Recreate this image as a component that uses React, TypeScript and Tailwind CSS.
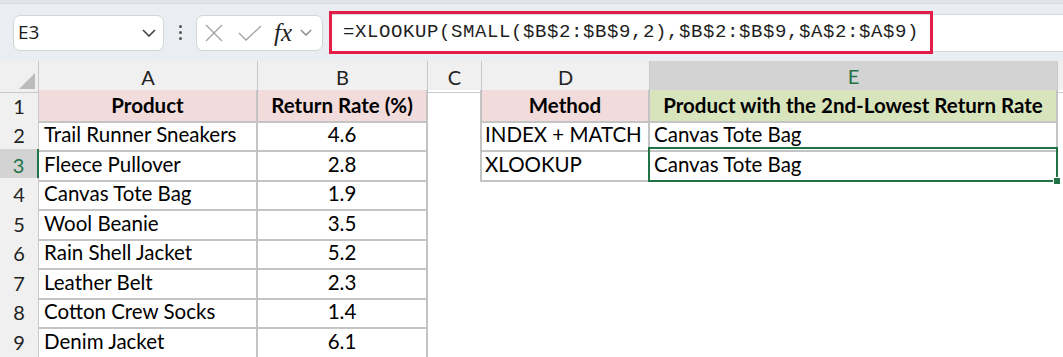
import React from "react";

const grid = "grid grid-cols-[39px_219px_170px_54px_168px_408px_1fr]";
const cellFont = "font-['Lato',sans-serif] text-[20.5px] text-black";

const products: [string, string][] = [
  ["Trail Runner Sneakers", "4.6"],
  ["Fleece Pullover", "2.8"],
  ["Canvas Tote Bag", "1.9"],
  ["Wool Beanie", "3.5"],
  ["Rain Shell Jacket", "5.2"],
  ["Leather Belt", "2.3"],
  ["Cotton Crew Socks", "1.4"],
  ["Denim Jacket", "6.1"],
];

const lookups: [string, string][] = [
  ["INDEX + MATCH", "Canvas Tote Bag"],
  ["XLOOKUP", "Canvas Tote Bag"],
];

function Chevron({ className }: { className?: string }) {
  return (
    <svg viewBox="0 0 14 8" className={className} fill="none" stroke="currentColor" strokeWidth="1.6">
      <path d="M1 1l6 6 6-6" />
    </svg>
  );
}

function Toolbar() {
  return (
    <div className="h-[61px] bg-[#eaedf1] flex flex-col">
      <div className="h-[4px] bg-[#e1e5e9] border-b border-[#d6dadf]" />
      <div className="flex items-center flex-1 pl-[13px]">
        <div className="w-[151px] h-[36px] bg-white border border-[#d2d5d9] rounded-[7px] flex items-center justify-between pl-[4px] pr-[7px]">
          <span className="font-['Open_Sans',sans-serif] text-[19px] text-[#1b1b1b]">E3</span>
          <Chevron className="w-[14px] h-[8px] text-[#444]" />
        </div>
        <div className="w-[32px] flex flex-col items-center gap-[3px]">
          <span className="w-[3px] h-[3px] rounded-full bg-[#555]" />
          <span className="w-[3px] h-[3px] rounded-full bg-[#555]" />
          <span className="w-[3px] h-[3px] rounded-full bg-[#555]" />
        </div>
        <div className="w-[127px] h-[36px] bg-white border border-[#d2d5d9] rounded-[7px] flex items-center pl-[8px]">
          <svg viewBox="0 0 18 18" className="w-[18px] h-[18px]" stroke="#a3a3a3" strokeWidth="1.3">
            <path d="M1 1l16 16M17 1L1 17" />
          </svg>
          <svg viewBox="0 0 24 16" className="w-[24px] h-[16px] ml-[15px]" fill="none" stroke="#a3a3a3" strokeWidth="1.3">
            <path d="M1 8l7 7L23 1" />
          </svg>
          <span className="ml-[12px] font-['Liberation_Serif',serif] italic text-[25px] leading-none text-[#222]">fx</span>
          <Chevron className="w-[12px] h-[7px] ml-[8px] text-[#8a8a8a]" />
        </div>
        <div className="flex-1 ml-[7px] h-[38px] bg-white border-y border-[#d6dadf] flex items-center">
          <div className="w-[604px] h-[43px] -ml-[1px] border-[3px] border-[#e11d48] flex items-center pl-[11px]">
            <span className="font-['Liberation_Mono',monospace] text-[19px] tracking-[0.6px] text-[#1e1e1e]">
              =XLOOKUP(SMALL($B$2:$B$9,2),$B$2:$B$9,$A$2:$A$9)
            </span>
          </div>
        </div>
      </div>
    </div>
  );
}

function HeaderRow() {
  const letters = ["A", "B", "C", "D", "E"];
  return (
    <div className={`${grid} h-[29px] bg-[#f0f0f0] font-['Lato',sans-serif] text-[20px] text-[#222]`}>
      <div className="relative border-r border-b border-[#c9c9c9]">
        <div className="absolute right-[3px] bottom-[3px] w-0 h-0 border-l-[16px] border-l-transparent border-b-[16px] border-b-[#bcbcbc]" />
      </div>
      {letters.map((l) =>
        l === "E" ? (
          <div key={l} className="flex items-center justify-center bg-[#d3d3d3] text-[#217346] border-r border-[#c9c9c9] border-b-2 border-b-[#217346]">
            {l}
          </div>
        ) : (
          <div key={l} className="flex items-center justify-center border-r border-b border-[#c9c9c9]">
            {l}
          </div>
        )
      )}
      <div className="border-b border-[#c9c9c9]" />
    </div>
  );
}

function RowHead({ n, selected }: { n: number; selected?: boolean }) {
  return selected ? (
    <div className="flex items-center justify-center bg-[#d3d3d3] text-[#217346] border-r-2 border-r-[#217346] border-b border-b-[#d6d6d6] font-['Lato',sans-serif] text-[20px]">
      {n}
    </div>
  ) : (
    <div className="flex items-center justify-center bg-[#f0f0f0] text-[#222] border-r border-r-[#c9c9c9] border-b border-b-[#d6d6d6] font-['Lato',sans-serif] text-[20px]">
      {n}
    </div>
  );
}

export default function App() {
  return (
    <div className="w-[1063px] h-[357px] overflow-hidden bg-white">
      <Toolbar />
      <HeaderRow />

      {/* row 1: headers of both tables */}
      <div className={`${grid} h-[29px] ${cellFont}`}>
        <RowHead n={1} />
        <div className="flex items-center justify-center font-bold bg-[#f2dcdb] border-r-2 border-b-2 border-[#c4c4c4]">Product</div>
        <div className="flex items-center justify-center font-bold bg-[#f2dcdb] border-r-2 border-b-2 border-[#c4c4c4]">Return Rate (%)</div>
        <div className="border-r-2 border-[#c4c4c4]" />
        <div className="flex items-center justify-center font-bold bg-[#f2dcdb] border-r-2 border-b-2 border-[#c4c4c4]">Method</div>
        <div className="flex items-center justify-center font-bold bg-[#d8e4bc] border-r-2 border-b-2 border-[#c4c4c4] whitespace-nowrap">
          Product with the 2nd-Lowest Return Rate
        </div>
        <div />
      </div>

      {products.map(([name, rate], i) => {
        const row = i + 2;
        const lk = lookups[i];
        return (
          <div key={row} className={`${grid} ${row % 2 === 0 ? "h-[30px]" : "h-[29px]"} ${cellFont}`}>
            <RowHead n={row} selected={row === 3} />
            <div className="flex items-center pl-[5px] border-r-2 border-b-2 border-[#c4c4c4] whitespace-nowrap">{name}</div>
            <div className="flex items-center justify-center border-r-2 border-b-2 border-[#c4c4c4]">{rate}</div>
            <div className={lk ? "border-r-2 border-[#c4c4c4]" : ""} />
            {lk ? (
              <>
                <div className="flex items-center pl-[3px] border-r-2 border-b-2 border-[#c4c4c4] whitespace-nowrap">{lk[0]}</div>
                <div className="relative flex items-center pl-[4px] border-r-2 border-b-2 border-[#c4c4c4]">
                  {lk[1]}
                  {row === 3 && (
                    <>
                      <div className="absolute -top-[2px] -left-[2px] -right-[2px] -bottom-[2px] border-2 border-[#217346]" />
                      <div className="absolute -right-[5px] -bottom-[5px] w-[8px] h-[8px] bg-[#217346] border border-white" />
                    </>
                  )}
                </div>
              </>
            ) : (
              <>
                <div />
                <div />
              </>
            )}
            <div />
          </div>
        );
      })}
    </div>
  );
}
